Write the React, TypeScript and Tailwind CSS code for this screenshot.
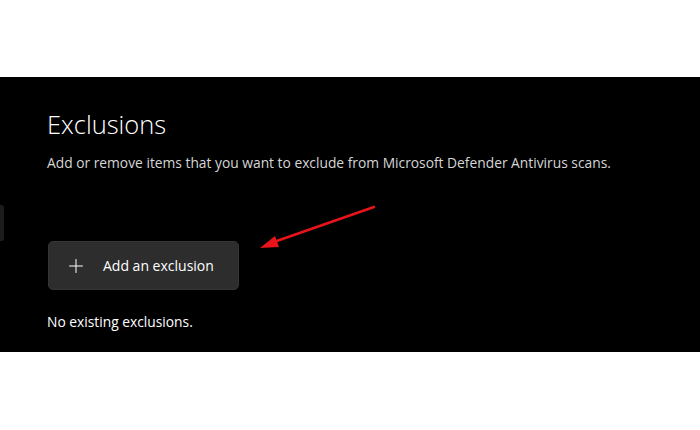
import { Plus } from "lucide-react"

export default function App() {
  return (
    <div className="w-[700px] h-[430px] bg-white flex flex-col" style={{ fontFamily: '"Open Sans", "Noto Sans", sans-serif' }}>
      <div className="h-[77px] shrink-0" />

      {/* Dark settings panel */}
      <div className="relative h-[275px] shrink-0 bg-black pl-[47px] pt-[29px] flex flex-col">
        {/* partially visible nav edge */}
        <div className="absolute left-0 top-[128px] w-[4px] h-[36px] bg-[#1c1c1c] rounded-r-[2px]" />

        <h1 className="text-[25.5px] leading-[36px] font-light text-white">Exclusions</h1>
        <p className="mt-[11px] text-[13.8px] leading-[20px] text-[#d6d6d6]">
          Add or remove items that you want to exclude from Microsoft Defender Antivirus scans.
        </p>

        <button className="mt-[68px] ml-[1px] w-[191px] h-[49px] flex items-center gap-[16px] pl-[16px] rounded-[5px] bg-[#2d2d2d] border border-[#353535] text-white text-[14px]">
          <Plus className="w-[22px] h-[22px]" strokeWidth={1.1} />
          <span>Add an exclusion</span>
        </button>

        <p className="mt-[22px] text-[13.8px] leading-[20px] text-white">No existing exclusions.</p>

        {/* annotation arrow */}
        <svg className="absolute left-[255px] top-[125px]" width="125" height="50" viewBox="0 0 125 50">
          <line x1="119" y1="5" x2="16" y2="41" stroke="#e8141a" strokeWidth="2.5" strokeLinecap="round" />
          <polygon points="5,46 20,34 24,45" fill="#e8141a" />
        </svg>
      </div>

      <div className="flex-1" />
    </div>
  )
}
